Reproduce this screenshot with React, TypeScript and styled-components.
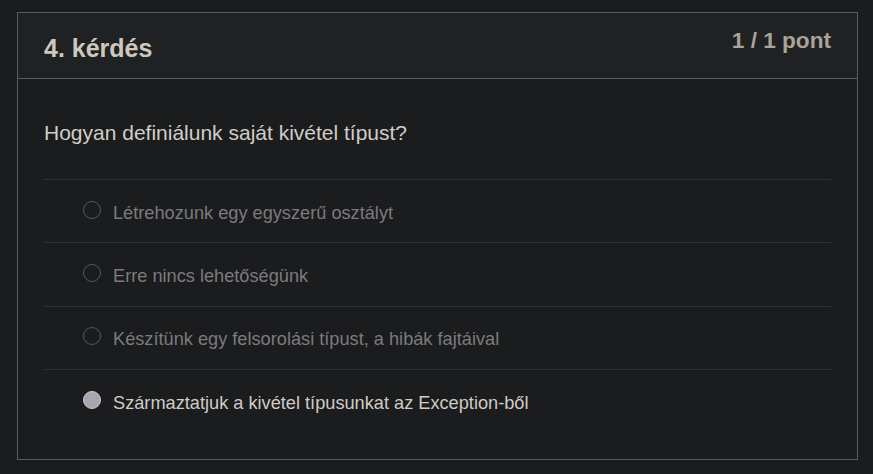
import React from "react";
import styled, { createGlobalStyle } from "styled-components";

const Global = createGlobalStyle`
  html, body { margin: 0; padding: 0; background: #1b1c1e; }
  body { font-family: "Liberation Sans", Arial, sans-serif; }
`;

const Page = styled.div`
  padding: 12px 16px 14px 17px;
`;

const Card = styled.section`
  width: 841px;
  box-sizing: border-box;
  border: 1px solid #5c5c5e;
  background: #1b1c1e;
`;

const Header = styled.header`
  display: flex;
  justify-content: space-between;
  align-items: flex-start;
  height: 66px;
  box-sizing: border-box;
  padding: 0 26px;
  background: #202123;
  border-bottom: 1px solid #5c5c5e;
`;

const Title = styled.h2`
  margin: 0;
  padding-top: 21px;
  font-size: 25px;
  line-height: 28px;
  font-weight: 700;
  color: #cdc7be;
`;

const Points = styled.div`
  padding-top: 15px;
  font-size: 22.6px;
  line-height: 26px;
  font-weight: 700;
  color: #a9a398;
`;

const Body = styled.div`
  padding: 0 26px 26px 26px;
`;

const Question = styled.p`
  margin: 0;
  height: 100px;
  box-sizing: border-box;
  padding-top: 42px;
  font-size: 21px;
  line-height: 24px;
  color: #d2cdc6;
`;

const Options = styled.ul`
  list-style: none;
  margin: 0;
  padding: 0;
`;

const Option = styled.li<{ $selected?: boolean }>`
  display: flex;
  align-items: center;
  gap: 12px;
  height: 63.4px;
  box-sizing: border-box;
  padding-left: 39px;
  border-top: 1px solid #303134;
  font-size: 18.2px;
  color: ${(p) => (p.$selected ? "#d0cbc4" : "#7b7b7d")};
`;

const Label = styled.span`
  padding-top: 4px;
`;

const Radio = styled.span<{ $checked?: boolean }>`
  flex: none;
  width: 18px;
  height: 18px;
  box-sizing: border-box;
  border-radius: 50%;
  border: 1.5px solid ${(p) => (p.$checked ? "#c9c8d0" : "#55575c")};
  background: ${(p) => (p.$checked ? "#a8a7b1" : "transparent")};
  margin-top: -3px;
`;

const options = [
  { text: "Létrehozunk egy egyszerű osztályt", selected: false },
  { text: "Erre nincs lehetőségünk", selected: false },
  { text: "Készítünk egy felsorolási típust, a hibák fajtáival", selected: false },
  { text: "Származtatjuk a kivétel típusunkat az Exception-ből", selected: true },
];

export default function App() {
  return (
    <>
      <Global />
      <Page>
        <Card>
          <Header>
            <Title>4. kérdés</Title>
            <Points>1 / 1 pont</Points>
          </Header>
          <Body>
            <Question>Hogyan definiálunk saját kivétel típust?</Question>
            <Options>
              {options.map((o) => (
                <Option key={o.text} $selected={o.selected}>
                  <Radio $checked={o.selected} />
                  <Label>{o.text}</Label>
                </Option>
              ))}
            </Options>
          </Body>
        </Card>
      </Page>
    </>
  );
}
